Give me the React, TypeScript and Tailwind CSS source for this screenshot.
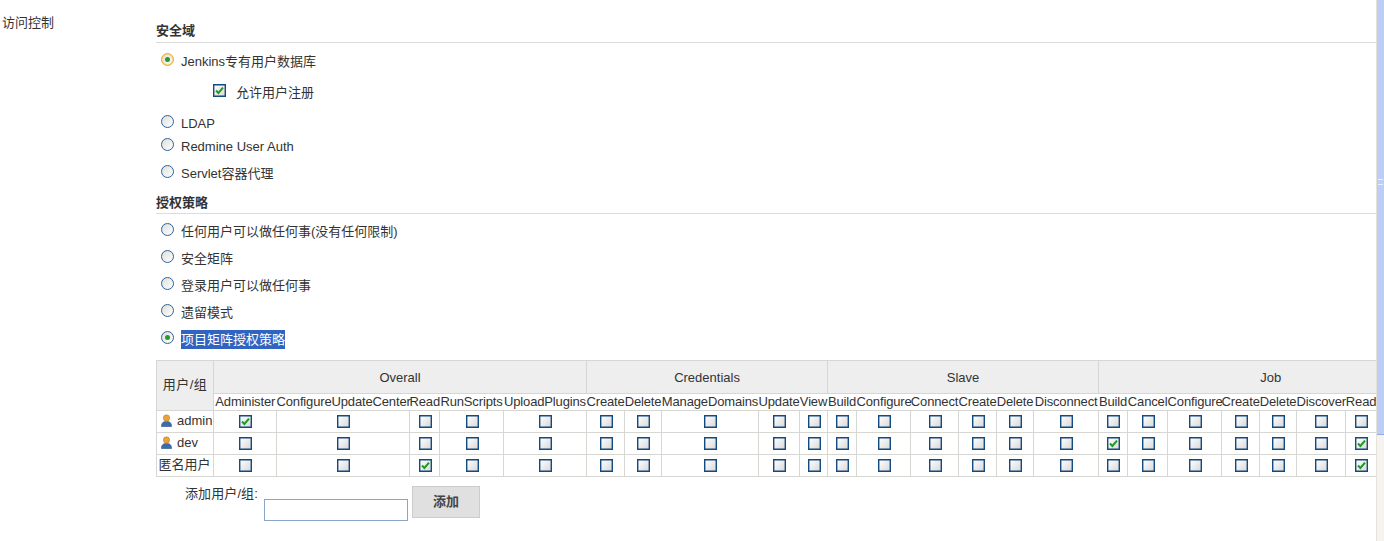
import React from "react";

function Check() {
  return (
    <svg width="11" height="11" viewBox="0 0 11 11">
      <path d="M2 5.5 L4.4 8 L9 2.6" fill="none" stroke="#1f9a1f" strokeWidth="2" />
    </svg>
  );
}

function Box({ on }: { on?: boolean }) {
  return (
    <span className="inline-flex w-[13px] h-[13px] items-center justify-center border border-[#134a80] bg-gradient-to-br from-white to-[#d8d8d8] align-middle shadow-[inset_0_0_0_0.4px_#134a80]">
      {on ? <Check /> : null}
    </span>
  );
}

function Radio({ on, glow }: { on?: boolean; glow?: boolean }) {
  return (
    <span
      className={
        "inline-flex w-[13px] h-[13px] mb-[2px] shrink-0 items-center justify-center rounded-full border bg-gradient-to-br from-[#deded8] to-white " +
        (glow ? "border-[#e2a63c] shadow-[inset_0_0_0_1px_#f6d890]" : "border-[#2f6296]")
      }
    >
      {on ? <span className="block w-[5px] h-[5px] rounded-full bg-[#2a9a2a]" /> : null}
    </span>
  );
}

function Option({ cls, label, on, picked, glow }: { cls: string; label: string; on?: boolean; picked?: boolean; glow?: boolean }) {
  return (
    <div className={"flex items-center gap-[7px] pl-[5px] " + cls}>
      <Radio on={on} glow={glow} />
      {picked ? (
        <span className="mt-[2px] h-[19px] leading-[19px] bg-[#3163c0] text-white">{label}</span>
      ) : (
        <span className="mt-[3px]">{label}</span>
      )}
    </div>
  );
}

const groups = [
  { name: "Overall", span: 5 },
  { name: "Credentials", span: 5 },
  { name: "Slave", span: 6 },
  { name: "Job", span: 8 },
];

const cols = [
  { name: "Administer", w: "w-[63px]" },
  { name: "ConfigureUpdateCenter", w: "w-[133px]" },
  { name: "Read", w: "w-[30px]" },
  { name: "RunScripts", w: "w-[64px]" },
  { name: "UploadPlugins", w: "w-[83px]" },
  { name: "Create", w: "w-[38px]" },
  { name: "Delete", w: "w-[37px]" },
  { name: "ManageDomains", w: "w-[97px]" },
  { name: "Update", w: "w-[41px]" },
  { name: "View", w: "w-[28px]" },
  { name: "Build", w: "w-[29px]" },
  { name: "Configure", w: "w-[54px]" },
  { name: "Connect", w: "w-[48px]" },
  { name: "Create", w: "w-[38px]" },
  { name: "Delete", w: "w-[37px]" },
  { name: "Disconnect", w: "w-[65px]" },
  { name: "Build", w: "w-[29px]" },
  { name: "Cancel", w: "w-[40px]" },
  { name: "Configure", w: "w-[54px]" },
  { name: "Create", w: "w-[38px]" },
  { name: "Delete", w: "w-[37px]" },
  { name: "Discover", w: "w-[49px]" },
  { name: "Read", w: "w-[31px]" },
  { name: "Workspace", w: "w-[66px]" },
];

const rows = [
  { name: "admin", user: true, checked: [0] },
  { name: "dev", user: true, checked: [16, 22] },
  { name: "匿名用户", user: false, checked: [2, 22] },
];

function UserIcon() {
  return (
    <svg width="11" height="13" viewBox="0 0 11 13" className="shrink-0">
      <path d="M0.5 12.5 C0.5 8.5 2.5 7.5 5.5 7.5 C8.5 7.5 10.5 8.5 10.5 12.5 Z" fill="#3a6cb0" stroke="#2a4f86" strokeWidth="0.6" />
      <circle cx="5.5" cy="4" r="3.2" fill="#e8a33c" stroke="#b9792a" strokeWidth="0.5" />
    </svg>
  );
}

const line = "border border-[#d6d6d2]";

export default function App() {
  return (
    <div className="flex w-[1384px] h-[541px] overflow-hidden bg-white text-[13px] leading-[16px] text-[#333] font-['Liberation_Sans','Noto_Sans_CJK_SC',sans-serif]">
      <div className="w-[156px] shrink-0 pl-[2px] pt-[15px]">访问控制</div>
      <div className="w-[1220px] shrink-0">
        <div className="h-[43px] flex items-end pb-[3px] border-b border-[#dcdcdc] font-bold">安全域</div>
        <Option cls="h-[34px]" label="Jenkins专有用户数据库" on glow />
        <div className="h-[28px] flex items-center gap-[9px] pl-[58px]">
          <span className="flex mb-[2px] -ml-[1px] mr-[1px]"><Box on /></span>
          <span className="mt-[3px]">允许用户注册</span>
        </div>
        <Option cls="h-[24px] mt-[5px]" label="LDAP" />
        <Option cls="h-[22px]" label="Redmine User Auth" />
        <Option cls="h-[32px]" label="Servlet容器代理" />
        <div className="h-[26px] flex items-end pb-[2px] border-b border-[#dcdcdc] font-bold">授权策略</div>
        <Option cls="h-[27px] mt-[3px]" label="任何用户可以做任何事(没有任何限制)" />
        <Option cls="h-[27px]" label="安全矩阵" />
        <Option cls="h-[27px]" label="登录用户可以做任何事" />
        <Option cls="h-[27px]" label="遗留模式" />
        <Option cls="h-[27px]" label="项目矩阵授权策略" on picked />
        <div className="mt-[8px] overflow-hidden">
          <table className="table-fixed border-collapse w-[1286px] text-center">
            <colgroup>
              <col className="w-[57px]" />
              {cols.map((c, i) => (
                <col key={i} className={c.w} />
              ))}
            </colgroup>
            <thead>
              <tr className="h-[33px]">
                <th rowSpan={2} className={line + " bg-[#eeeeee] font-normal pb-[1px] tracking-[0.5px]"}>用户/组</th>
                {groups.map((g) => (
                  <th key={g.name} colSpan={g.span} className={line + " bg-[#eeeeee] font-normal pt-[2px]"}>{g.name}</th>
                ))}
              </tr>
              <tr className="h-[17px]">
                {cols.map((c, i) => (
                  <th key={i} className="font-normal whitespace-nowrap p-0 overflow-visible tracking-[-0.15px]">{c.name}</th>
                ))}
              </tr>
            </thead>
            <tbody>
              {rows.map((r) => (
                <tr key={r.name} className="h-[22px]">
                  <td className={line + " p-0"}>
                    {r.user ? (
                      <div className="flex items-center gap-[5px] pl-[4px] pb-[2px]">
                        <UserIcon />
                        <span>{r.name}</span>
                      </div>
                    ) : (
                      <span className="block pb-[1px] -ml-[1px]">{r.name}</span>
                    )}
                  </td>
                  {cols.map((c, i) => (
                    <td key={i} className={line + " p-0"}>
                      <span className="flex justify-center pl-[1px]"><Box on={r.checked.includes(i)} /></span>
                    </td>
                  ))}
                </tr>
              ))}
            </tbody>
          </table>
        </div>
        <div className="flex mt-[9px] pl-[29px]">
          <span className="tracking-[0.1px]">添加用户/组:</span>
          <input className="w-[144px] h-[22px] mt-[13px] ml-[6px] border border-[#8aa6c6] bg-white" />
          <button className="w-[68px] h-[32px] ml-[4px] bg-[#e0e0e0] border border-[#cccccc] font-bold text-[#444]">添加</button>
        </div>
      </div>
      <div className="flex-1 flex flex-col border-l border-[#e6e2da] bg-[#f5f3ee]">
        <div className="h-[435px] bg-[#bccdf8] border-b border-[#8fa8e8] flex items-center justify-center pb-[70px]">
          <span className="block w-[5px] h-[6px] border-y border-[#eef2fe]" />
        </div>
      </div>
    </div>
  );
}
